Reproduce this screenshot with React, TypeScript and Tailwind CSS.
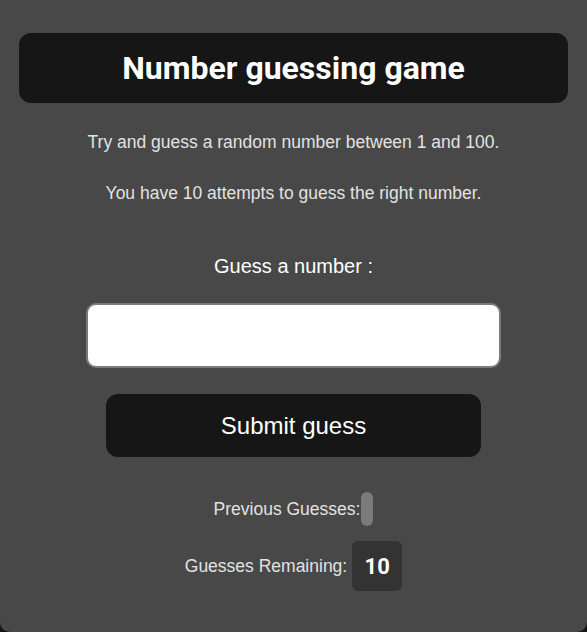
export default function App() {
  return (
    <div className="min-h-screen bg-[#161616] font-['Liberation_Sans',Arial,sans-serif]">
      <div className="h-[632px] rounded-b-[10px] bg-[#484848] px-[19px] pt-[33px]">
        {/* Title */}
        <h1 className="flex h-[70px] items-center justify-center rounded-[12px] bg-[#161616] font-['Roboto',sans-serif] text-[32px] font-bold text-white">
          Number guessing game
        </h1>

        <div className="flex flex-col items-center">
          <p className="mt-[27px] text-[17.5px] leading-6 text-[#e2e2e2]">
            Try and guess a random number between 1 and 100.
          </p>
          <p className="mt-[27px] text-[17.5px] leading-6 text-[#e2e2e2]">
            You have 10 attempts to guess the right number.
          </p>

          <label className="mt-[47px] text-[20px] leading-7 text-white">Guess a number :</label>
          <input
            type="text"
            className="mt-[23px] h-[65px] w-[415px] rounded-[10px] border-2 border-[#7a7a7a] bg-white px-3 text-[20px] outline-none"
          />

          <button className="mt-[26px] h-[63px] w-[375px] rounded-[12px] bg-[#161616] text-[24px] text-white">
            Submit guess
          </button>

          {/* Stats */}
          <div className="mt-[35px] flex h-[34px] items-center">
            <span className="text-[17.5px] text-[#e2e2e2]">Previous Guesses:</span>
            <span className="ml-px h-[34px] w-[12px] rounded-[6px] bg-[#7b7b7b]" />
          </div>
          <div className="mt-[15px] flex items-center gap-[5px]">
            <span className="text-[17.5px] text-[#e2e2e2]">Guesses Remaining:</span>
            <span className="flex h-[50px] w-[50px] items-center justify-center rounded-[6px] bg-[#333333] font-['Roboto',sans-serif] text-[22px] font-bold text-white">
              10
            </span>
          </div>
        </div>
      </div>
    </div>
  );
}
